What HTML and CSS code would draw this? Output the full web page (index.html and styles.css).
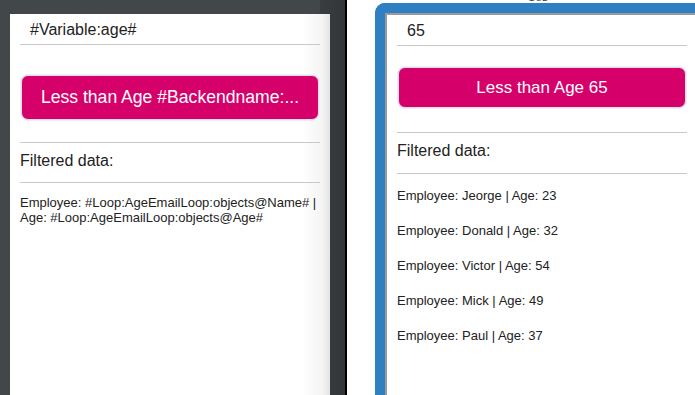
FILE: index.html
```html
<!DOCTYPE html>
<html lang="en">
<head>
    <meta charset="UTF-8">
    <meta name="viewport" content="width=device-width, initial-scale=1.0">
    <title>Filtered data preview</title>
    <link rel="stylesheet" href="styles.css">
</head>
<body>
    <div class="editor">
        <div class="screen">
            <div class="field">#Variable:age#</div>
            <div class="btn-row btn-row-edit">
                <button class="btn">Less than Age #Backendname:...</button>
            </div>
            <div class="heading">Filtered data:</div>
            <div class="rows">
                <div class="row row-template">Employee: #Loop:AgeEmailLoop:objects@Name# | Age: #Loop:AgeEmailLoop:objects@Age#</div>
            </div>
        </div>
    </div>
    <div class="split"></div>
    <div class="preview">
        <div class="caption">169</div>
        <div class="device">
            <div class="screen screen-live">
                <div class="field">65</div>
                <div class="btn-row">
                    <button class="btn">Less than Age 65</button>
                </div>
                <div class="heading">Filtered data:</div>
                <div class="rows rows-live">
                    <div class="row">Employee: Jeorge | Age: 23</div>
                    <div class="row">Employee: Donald | Age: 32</div>
                    <div class="row">Employee: Victor | Age: 54</div>
                    <div class="row">Employee: Mick | Age: 49</div>
                    <div class="row">Employee: Paul | Age: 37</div>
                </div>
            </div>
        </div>
    </div>
</body>
</html>
```

FILE: styles.css
```css
html, body {
    margin: 0;
    height: 100%;
}
body {
    font-family: "Liberation Sans", Arial, sans-serif;
    display: flex;
    height: 395px;
    overflow: hidden;
    background-color: #fff;
    color: #222;
}
.editor {
    width: 335px;
    padding: 14px 0 0 10px;
    background: linear-gradient(to right, #42474a 0, #42474a 320px, #3a3d40 320px, #333538 100%);
    flex-shrink: 0;
}
.editor .screen {
    width: 320px;
    height: 100%;
    background: linear-gradient(to right, #fff 0, #fff 292px, #f4f4f4 312px, #e4e4e4 320px);
}
.split {
    width: 2px;
    background-color: #000;
    flex-shrink: 0;
}
.preview {
    flex: 1;
    padding: 3px 0 0 28px;
    overflow: hidden;
    position: relative;
}
.caption {
    position: absolute;
    top: -11px;
    left: 181px;
    font-family: "Liberation Serif", serif;
    font-size: 14px;
    color: #222;
}
.device {
    width: 350px;
    height: 100%;
    border-left: 10px solid #2e80c2;
    border-top: 10px solid #2e80c2;
    border-top-left-radius: 10px;
    background-color: #2e80c2;
}
.screen-live {
    height: 100%;
    background-color: #fff;
    border-left: 2px solid #9a9a9a;
    border-top: 2px solid #9a9a9a;
    width: 312px;
}
.screen {
    box-sizing: border-box;
}
.field {
    margin: 0 10px;
    padding: 7px 10px 0;
    height: 23px;
    font-size: 16px;
    border-bottom: 1px solid #c8c8c8;
}
.btn-row {
    margin: 0 10px;
    padding: 21px 0 24px;
    border-bottom: 1px solid #c8c8c8;
}
.btn-row-edit {
    padding: 30px 0 22px;
}
.btn {
    display: block;
    width: calc(100% - 2px);
    margin: 0 auto;
    height: 42px;
    border: 1px solid #dfe0ec;
    border-radius: 7px;
    background-color: #d6006b;
    color: #fff;
    font-family: "Liberation Sans", Arial, sans-serif;
    font-size: 17px;
    box-shadow: 0 0 0 1px #eceef5;
}
.btn-row-edit .btn {
    height: 45px;
    font-size: 17.6px;
}
.screen-live .btn {
    height: 41px;
}
.heading {
    margin: 0 10px;
    padding: 9px 0 0;
    height: 30px;
    font-size: 16px;
    border-bottom: 1px solid #c8c8c8;
}
.screen-live .heading {
    height: 31px;
}
.rows {
    margin: 0 10px;
    padding-top: 12px;
    font-size: 13px;
    line-height: 15px;
}
.rows-live {
    padding-top: 14px;
}
.rows-live .row {
    line-height: 15px;
    margin-bottom: 20px;
}
```
